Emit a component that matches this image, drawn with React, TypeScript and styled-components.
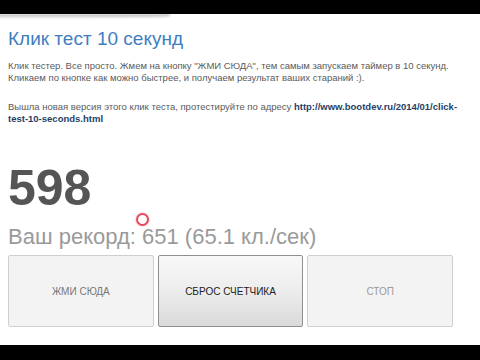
import React from "react";
import styled, { createGlobalStyle } from "styled-components";

const Global = createGlobalStyle`
  html, body { margin: 0; padding: 0; background: #fff; }
  body { font-family: "Liberation Sans", Arial, sans-serif; }
`;

const Frame = styled.div`
  position: relative;
  width: 480px;
  height: 360px;
  display: flex;
  flex-direction: column;
  overflow: hidden;
  background: #fff;
`;

const Bar = styled.div<{ $h: number; $shadow?: boolean }>`
  position: relative;
  flex: 0 0 ${(p) => p.$h}px;
  background: #000;
  &::after {
    content: "";
    display: ${(p) => (p.$shadow ? "block" : "none")};
    position: absolute;
    left: -10px;
    top: 100%;
    width: 180px;
    height: 5px;
    background: linear-gradient(rgba(0, 0, 0, 0.3), rgba(0, 0, 0, 0));
    border-radius: 0 0 60% 0;
    filter: blur(1px);
  }
`;

const Main = styled.main`
  flex: 1;
  padding: 14px 8px 0 8px;
  display: flex;
  flex-direction: column;
`;

const Title = styled.h1`
  margin: 0;
  font-weight: normal;
  font-size: 19px;
  line-height: 22px;
  color: #3e7ebf;
`;

const Para = styled.p`
  margin: 0;
  font-size: 9.5px;
  line-height: 12px;
  color: #5a5a5a;
  & + & {
    margin-top: 17px;
  }
  &:first-of-type {
    margin-top: 10px;
  }
`;

const Link = styled.a`
  color: #1f3f66;
  font-weight: bold;
  text-decoration: none;
`;

const Count = styled.div`
  margin-top: 38px;
  font-size: 50px;
  font-weight: bold;
  line-height: 50px;
  color: #555;
`;

const Record = styled.div`
  margin-top: 12px;
  font-size: 22px;
  line-height: 24px;
  color: #9a9a9a;
`;

const Buttons = styled.div`
  margin-top: 6px;
  width: 445px;
  display: grid;
  grid-template-columns: repeat(3, 1fr);
  gap: 4px;
`;

const Btn = styled.button<{ $variant: "start" | "reset" | "stop" }>`
  height: 72px;
  margin: 0;
  padding: 0;
  border-radius: 2px;
  font-family: "Liberation Sans", Arial, sans-serif;
  font-size: 10px;
  text-transform: uppercase;
  border: 1px solid ${(p) => (p.$variant === "reset" ? "#8f8f8f" : "#cfcfcf")};
  color: ${(p) =>
    p.$variant === "reset" ? "#222" : p.$variant === "start" ? "#777" : "#9a9a9a"};
  background: ${(p) =>
    p.$variant === "reset"
      ? "linear-gradient(#f8f8f8 0%, #eeeeee 45%, #dadada 100%)"
      : "#f3f3f3"};
`;

const Cursor = styled.div`
  position: absolute;
  left: 136px;
  top: 213px;
  width: 9px;
  height: 9px;
  border-radius: 50%;
  border: 2.5px solid #e5475f;
  box-shadow: 0 0 2px rgba(229, 71, 95, 0.6);
`;

export default function App() {
  return (
    <>
      <Global />
      <Frame>
        <Bar $h={14} $shadow />
        <Main>
          <Title>Клик тест 10 секунд</Title>
          <Para>
            Клик тестер. Все просто. Жмем на кнопку "ЖМИ СЮДА", тем самым запускаем таймер в 10 секунд.
            Кликаем по кнопке как можно быстрее, и получаем результат ваших стараний :).
          </Para>
          <Para>
            Вышла новая версия этого клик теста, протестируйте по адресу{" "}
            <Link href="#">
              http://www.bootdev.ru/2014/01/click-<wbr />test-10-seconds.html
            </Link>
          </Para>
          <Count>598</Count>
          <Record>Ваш рекорд: 651 (65.1 кл./сек)</Record>
          <Buttons>
            <Btn $variant="start">Жми сюда</Btn>
            <Btn $variant="reset">Сброс счетчика</Btn>
            <Btn $variant="stop">Стоп</Btn>
          </Buttons>
        </Main>
        <Bar $h={15} />
        <Cursor />
      </Frame>
    </>
  );
}
